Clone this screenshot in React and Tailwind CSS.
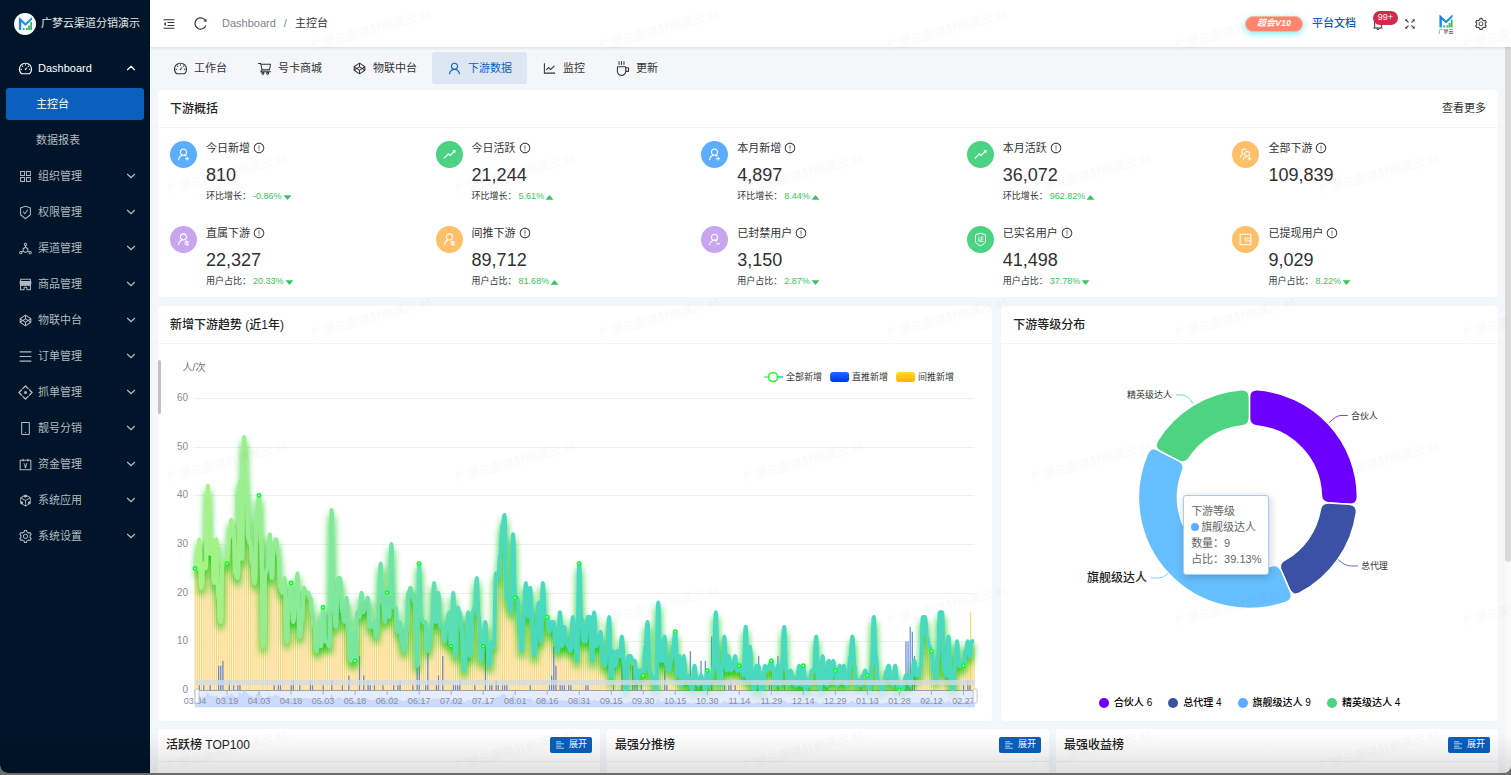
import { useState } from 'react';
import { ChevronDown, ChevronUp } from 'lucide-react';
import {
  AiFillCaretDown,
  AiFillCaretUp,
  AiFillShop,
  AiOutlineAccountBook,
  AiOutlineAlignLeft,
  AiOutlineAppstore,
  AiOutlineBell,
  AiOutlineCodeSandbox,
  AiOutlineCodepen,
  AiOutlineCoffee,
  AiOutlineDashboard,
  AiOutlineDeploymentUnit,
  AiOutlineExclamationCircle,
  AiOutlineFullscreen,
  AiOutlineLineChart,
  AiOutlineMenu,
  AiOutlineMenuFold,
  AiOutlineMobile,
  AiOutlineReload,
  AiOutlineRise,
  AiOutlineSafetyCertificate,
  AiOutlineSetting,
  AiOutlineShoppingCart,
  AiOutlineUser,
  AiOutlineUserAdd,
  AiOutlineUserDelete,
  AiOutlineUserSwitch,
  AiOutlineUsergroupAdd,
  AiOutlineWallet,
} from 'react-icons/ai';

function GrabIcon({ className }) {
  return (
    <svg viewBox="0 0 14 14" className={className} fill="none" stroke="currentColor" strokeWidth="1.2">
      <path d="M4.2 3.6 7 .9l2.8 2.7M10.4 4.2 13.1 7l-2.7 2.8M9.8 10.4 7 13.1l-2.8-2.7M3.6 9.8.9 7l2.7-2.8" />
      <circle cx="7" cy="7" r="1.4" fill="currentColor" stroke="none" />
    </svg>
  );
}

function VerifiedIcon({ className }) {
  return (
    <svg viewBox="0 0 15 15" className={className} fill="none" stroke="currentColor">
      <path d="M7.5 1.3 12.5 2.8v6.300c0 2-2.300 3.500-5 4.700-2.700-1.200-5-2.700-5-4.700V2.800z" />
      <path d="M4.800 5.200h.900v4l.700-.6M6.800 5.100h3.600M8.700 5.100v4.200M8.700 7.100h1.500M7 6.700v2.600M6.400 9.400h4.100" strokeWidth=".7" />
    </svg>
  );
}

function LogoMark({ className }) {
  return (
    <svg viewBox="0 0 16 15" className={className}>
      <defs>
        <linearGradient id="logoBlue" x1="0" y1="0" x2="1" y2="1">
          <stop offset="0" stopColor="#1b6fe0" />
          <stop offset="1" stopColor="#12b8e8" />
        </linearGradient>
      </defs>
      <path d="M1 14.500V.500l7 6.500L15 .500v3l-7 6.700-4.500-4.300v8.600z" fill="url(#logoBlue)" />
      <path d="M5 12.200h2v2.300H5z" fill="#22b0e0" />
      <path d="M8.500 12h1.900v2.500H8.500zM10.800 9.700h1.900v4.800h-1.900zM13.100 6h1.900v8.500h-1.900z" fill="#35b85a" />
    </svg>
  );
}

const menus = [
  { label: '组织管理', Icon: AiOutlineAppstore },
  { label: '权限管理', Icon: AiOutlineSafetyCertificate },
  { label: '渠道管理', Icon: AiOutlineDeploymentUnit },
  { label: '商品管理', Icon: AiFillShop },
  { label: '物联中台', Icon: AiOutlineCodepen },
  { label: '订单管理', Icon: AiOutlineMenu },
  { label: '抓单管理', Icon: GrabIcon },
  { label: '靓号分销', Icon: AiOutlineMobile },
  { label: '资金管理', Icon: AiOutlineAccountBook },
  { label: '系统应用', Icon: AiOutlineCodeSandbox },
  { label: '系统设置', Icon: AiOutlineSetting },
];

const tabs = [
  { label: '工作台', Icon: AiOutlineDashboard },
  { label: '号卡商城', Icon: AiOutlineShoppingCart },
  { label: '物联中台', Icon: AiOutlineCodepen },
  { label: '下游数据', Icon: AiOutlineUser },
  { label: '监控', Icon: AiOutlineLineChart },
  { label: '更新', Icon: AiOutlineCoffee },
];

const stats = [
  { label: '今日新增', value: '810', sub: '环比增长：', rate: '-0.86%', up: false, Icon: AiOutlineUserAdd, color: 'bg-[#5cadff]' },
  { label: '今日活跃', value: '21,244', sub: '环比增长：', rate: '5.61%', up: true, Icon: AiOutlineRise, color: 'bg-[#4cd283]' },
  { label: '本月新增', value: '4,897', sub: '环比增长：', rate: '8.44%', up: true, Icon: AiOutlineUserAdd, color: 'bg-[#5cadff]' },
  { label: '本月活跃', value: '36,072', sub: '环比增长：', rate: '962.82%', up: true, Icon: AiOutlineRise, color: 'bg-[#4cd283]' },
  { label: '全部下游', value: '109,839', Icon: AiOutlineUsergroupAdd, color: 'bg-[#ffc069]' },
  { label: '直属下游', value: '22,327', sub: '用户占比：', rate: '20.33%', up: false, Icon: AiOutlineUserSwitch, color: 'bg-[#c9a5f0]' },
  { label: '间推下游', value: '89,712', sub: '用户占比：', rate: '81.68%', up: true, Icon: AiOutlineUserSwitch, color: 'bg-[#ffc069]' },
  { label: '已封禁用户', value: '3,150', sub: '用户占比：', rate: '2.87%', up: false, Icon: AiOutlineUserDelete, color: 'bg-[#c9a5f0]' },
  { label: '已实名用户', value: '41,498', sub: '用户占比：', rate: '37.78%', up: false, Icon: VerifiedIcon, color: 'bg-[#4cd283]' },
  { label: '已提现用户', value: '9,029', sub: '用户占比：', rate: '8.22%', up: false, Icon: AiOutlineWallet, color: 'bg-[#ffc069]' },
];

// daily totals, 03.04 -> 03.04 next year
const totals = [
  25, 25, 31, 21, 26, 25, 42, 28, 31, 22, 31, 19, 14, 27, 27, 26, 31, 35, 33, 24, 23, 43, 27, 52, 41, 31, 30, 26, 22, 36,
  40, 30, 9, 24, 25, 32, 23, 30, 31, 28, 21, 20, 23, 10, 18, 22, 14, 17, 24, 11, 14, 21, 20, 20, 19, 16, 13, 8, 14, 9,
  17, 10, 10, 9, 37, 17, 13, 23, 23, 16, 14, 19, 12, 6, 12, 6, 16, 15, 20, 16, 18, 19, 13, 13, 14, 11, 18, 26, 18, 14,
  20, 15, 30, 17, 17, 12, 14, 10, 8, 12, 20, 21, 19, 18, 5, 26, 15, 14, 14, 8, 10, 14, 22, 14, 20, 13, 13, 10, 14, 16,
  9, 20, 7, 17, 16, 12, 4, 7, 16, 7, 16, 17, 23, 15, 6, 9, 14, 9, 5, 10, 9, 24, 23, 28, 34, 36, 19, 18, 16, 32,
  19, 19, 13, 8, 15, 22, 15, 21, 13, 7, 12, 18, 10, 22, 15, 15, 12, 14, 14, 10, 8, 16, 9, 13, 10, 9, 8, 15, 10, 6,
  26, 15, 10, 10, 15, 15, 6, 16, 9, 10, 12, 6, 5, 8, 15, 2, 8, 5, 8, 7, 11, 5, 0, 7, 7, 6, 6, 2, 4, 4,
  3, 9, 14, 4, 3, 2, 0, 18, 6, 6, 11, 5, 4, 6, 9, 12, 3, 7, 1, 7, 2, 3, 1, 0, 5, 2, 1, 3, 2, 0,
  4, 1, 3, 5, 16, 4, 1, 5, 11, 4, 7, 4, 5, 7, 4, 5, 4, 3, 13, 2, 9, 2, 0, 5, 5, 0, 0, 5, 4, 5,
  6, 4, 1, 5, 1, 6, 13, 4, 1, 4, 3, 1, 1, 5, 1, 5, 0, 2, 1, 4, 4, 11, 2, 0, 7, 2, 1, 6, 2, 6,
  4, 1, 5, 2, 5, 1, 2, 7, 11, 5, 1, 2, 1, 3, 4, 3, 0, 5, 15, 7, 2, 1, 0, 2, 4, 5, 2, 1, 5, 2,
  0, 0, 1, 3, 3, 1, 3, 6, 3, 3, 5, 15, 15, 11, 9, 8, 4, 2, 7, 16, 16, 4, 3, 11, 2, 0, 5, 10, 5, 5,
  5, 8, 10, 7, 10, 10,
];

// direct referrals: day index -> count
const direct = {
  2: 1, 4: 1, 7: 1, 11: 5, 12: 5, 13: 6, 16: 2, 18: 1, 20: 1, 21: 1, 37: 1, 39: 1, 40: 1, 45: 1, 46: 2, 49: 1, 54: 2, 55: 1,
  60: 1, 64: 2, 69: 1, 72: 3, 77: 7, 79: 3, 81: 2, 82: 1, 84: 1, 88: 1, 93: 1, 95: 1, 96: 2, 102: 1, 104: 5, 105: 5, 108: 1,
  109: 9, 113: 1, 114: 3, 116: 7, 121: 1, 122: 1, 123: 1, 124: 2, 131: 1, 136: 8, 138: 1, 139: 1, 141: 2, 142: 1, 144: 1,
  145: 1, 146: 1, 157: 1, 166: 1, 167: 3, 168: 9, 169: 5, 171: 1, 172: 1, 173: 1, 175: 1, 176: 1, 183: 1, 184: 1, 196: 1,
  200: 9, 205: 5, 206: 6, 207: 2, 209: 2, 220: 4, 221: 1, 232: 8, 237: 6, 239: 6, 242: 11, 248: 1, 250: 1, 251: 2, 253: 1,
  264: 7, 269: 1, 270: 1, 273: 7, 276: 1, 296: 6, 312: 3, 317: 1, 333: 10, 334: 10, 335: 13, 336: 12, 337: 7, 360: 1,
  362: 2, 363: 1,
};

const LEFT = 37;
const BASE = 346;
const STEP = 779 / 365;
const UNIT = 292 / 60;
const px = (i) => LEFT + i * STEP;
const py = (v) => BASE - v * UNIT;

const linePath = totals
  .map((v, i) => {
    if (i === 0) return `M${px(0)} ${py(v)}`;
    const mid = px(i - 0.5).toFixed(2);
    return `C${mid} ${py(totals[i - 1]).toFixed(2)} ${mid} ${py(v).toFixed(2)} ${px(i).toFixed(2)} ${py(v).toFixed(2)}`;
  })
  .join('');

const areaPath = `M${LEFT} ${BASE}${totals.map((v, i) => `L${px(i).toFixed(2)} ${py(v).toFixed(2)}`).join('')}L${px(365)} ${BASE}Z`;
const zoomPath = `M${LEFT} 363${totals.map((v, i) => `L${px(i).toFixed(2)} ${(360 - v * 0.27).toFixed(2)}`).join('')}L${px(365)} 363Z`;

const dates = [
  '03.04', '03.19', '04.03', '04.18', '05.03', '05.18', '06.02', '06.17', '07.02', '07.17', '08.01', '08.16', '08.31',
  '09.15', '09.30', '10.15', '10.30', '11.14', '11.29', '12.14', '12.29', '01.13', '01.28', '02.12', '02.27',
];

function TrendChart() {
  return (
    <svg viewBox="0 0 834 377" className="block w-full" role="img" aria-label="新增下游趋势">
      <defs>
        <linearGradient id="lineColor" gradientUnits="userSpaceOnUse" x1="37" y1="0" x2="816" y2="0">
          <stop offset="0" stopColor="#a9f484" />
          <stop offset="0.41" stopColor="#48d9be" />
          <stop offset="1" stopColor="#48d9be" />
        </linearGradient>
        <linearGradient id="blueBar" x1="0" y1="0" x2="0" y2="1">
          <stop offset="0" stopColor="#1a6dff" />
          <stop offset="1" stopColor="#0030ff" />
        </linearGradient>
        <linearGradient id="yellowBar" x1="0" y1="0" x2="0" y2="1">
          <stop offset="0" stopColor="#ffdc2e" />
          <stop offset="1" stopColor="#ffb000" />
        </linearGradient>
        <filter id="lineShadow" filterUnits="userSpaceOnUse" x="0" y="40" width="834" height="330">
          <feDropShadow dx="0" dy="6" stdDeviation="3.5" floodColor="#10c80c" floodOpacity="0.95" />
        </filter>
      </defs>

      <text x="36" y="27" textAnchor="middle" fontSize="10" fill="#6e7079">人/次</text>
      {[0, 10, 20, 30, 40, 50, 60].map((v) => (
        <g key={v}>
          <path d={`M36 ${Math.round(py(v))}.5H816`} stroke={v === 0 ? '#9aa0b4' : '#efeff2'} />
          <text x="30" y={py(v) + 3} textAnchor="end" fontSize="10" fill="#8a8c93">{v}</text>
        </g>
      ))}

      <path d={areaPath} fill="#ffe9c2" opacity="0.65" />
      {totals.map((v, i) => (
        <rect key={i} x={px(i) - 0.4} y={py(v)} width="1" height={v * UNIT} fill="#ffc53a" opacity="0.65" />
      ))}
      <rect x="812" y={py(16)} width="1" height={16 * UNIT} fill="#ffd83a" />
      {Object.entries(direct).map(([i, v]) => (
        <rect key={i} x={px(Number(i)) - 0.5} y={py(v)} width="1.3" height={v * UNIT} fill="#3f6cd8" opacity="0.75" />
      ))}
      <path
        d={linePath}
        fill="none"
        stroke="url(#lineColor)"
        strokeWidth="4"
        strokeLinejoin="round"
        strokeLinecap="butt"
        filter="url(#lineShadow)"
      />
      {totals.map((v, i) =>
        i % 15 === 0 ? <circle key={i} cx={px(i)} cy={py(v)} r="1.6" fill="#fff" stroke="#00ff1e" strokeWidth="1.5" /> : null
      )}

      {/* range slider */}
      <rect x="38" y="336" width="779" height="5" fill="#d2dbe6" opacity="0.8" />
      <rect x="38" y="347" width="779" height="16" fill="#dfe8fd" opacity="0.8" />
      <path d={zoomPath} fill="#c6d6fb" stroke="#adc3f5" strokeWidth="0.5" opacity="0.8" />
      {dates.map((d, i) => (
        <g key={d}>
          <path d={`M${px(i * 15)} 347v4`} stroke="#aab0c4" />
          <text x={px(i * 15)} y="360" textAnchor="middle" fontSize="9" fill="#858ca3">{d}</text>
        </g>
      ))}
      <rect x="37" y="345" width="4" height="14" rx="1" fill="#fff" stroke="#acb8d1" strokeWidth="0.8" />
      <rect x="815" y="345" width="4" height="14" rx="1" fill="#fff" stroke="#acb8d1" strokeWidth="0.8" />

      <path d="M606 33h6" stroke="#96efa0" strokeWidth="2" />
      <path d="M619 33h6" stroke="#48d9be" strokeWidth="2" />
      <circle cx="615" cy="33" r="4.5" fill="#fff" stroke="#1cff1c" strokeWidth="1.5" />
      <rect x="672" y="28" width="19" height="10" rx="3" fill="url(#blueBar)" />
      <rect x="738" y="28" width="19" height="10" rx="3" fill="url(#yellowBar)" />
      <g fontSize="9" fill="#333">
        <text x="628" y="36">全部新增</text>
        <text x="694" y="36">直推新增</text>
        <text x="760" y="36">间推新增</text>
      </g>
    </svg>
  );
}

const levels = [
  { name: '合伙人', count: 6, color: '#6c00ff', dot: 'bg-[#6c00ff]' },
  { name: '总代理', count: 4, color: '#3b51a3', dot: 'bg-[#3b51a3]' },
  { name: '旗舰级达人', count: 9, color: '#66bfff', dot: 'bg-[#5cadff]' },
  { name: '精英级达人', count: 4, color: '#4ed382', dot: 'bg-[#4ed382]' },
];

const CX = 248.5;
const CY = 153.5;

// ring sector with rounded corners, angles in radians clockwise from 12 o'clock
function sector(a0, a1, inner, outer) {
  const c = 8;
  const pt = (a, r) => `${(CX + r * Math.sin(a)).toFixed(2)} ${(CY - r * Math.cos(a)).toFixed(2)}`;
  const large = a1 - a0 > Math.PI ? 1 : 0;
  return [
    `M${pt(a0 + c / outer, outer)}`,
    `A${outer} ${outer} 0 ${large} 1 ${pt(a1 - c / outer, outer)}`,
    `Q${pt(a1, outer)} ${pt(a1, outer - c)}`,
    `L${pt(a1, inner + c)}`,
    `Q${pt(a1, inner)} ${pt(a1 - c / inner, inner)}`,
    `A${inner} ${inner} 0 ${large} 0 ${pt(a0 + c / inner, inner)}`,
    `Q${pt(a0, inner)} ${pt(a0, inner + c)}`,
    `L${pt(a0, outer - c)}`,
    `Q${pt(a0, outer)} ${pt(a0 + c / outer, outer)}Z`,
  ].join('');
}

function LevelChart() {
  const sum = levels.reduce((s, l) => s + l.count, 0);
  let angle = 0;
  return (
    <svg viewBox="0 0 497 345" className="block w-full" role="img" aria-label="下游等级分布">
      {levels.map((l, i) => {
        const start = angle;
        angle += (l.count / sum) * Math.PI * 2;
        return (
          <path key={l.name} d={sector(start, angle, 72, i === 2 ? 111 : 108)} fill={l.color} stroke="#fff" strokeWidth="1.5" />
        );
      })}
      <g fill="none">
        <path d="M328 79q7-7.5 12-7.5h7" stroke="#6c00ff" strokeWidth="0.8" />
        <path d="M337 215.5q7 6.5 13 6.5h7" stroke="#3b51a3" strokeWidth="0.8" />
        <path d="M150 234h8q5 0 9-4.5" stroke="#66bfff" strokeWidth="0.8" />
        <path d="M175 51h6q6 0 11 8.5" stroke="#4ed382" strokeWidth="0.8" />
      </g>
      <g fontSize="9" fill="#333">
        <text x="350" y="75">合伙人</text>
        <text x="360" y="225">总代理</text>
        <text x="171" y="54" textAnchor="end">精英级达人</text>
      </g>
      <text x="146" y="238" textAnchor="end" fontSize="12" fontWeight="500" fill="#222">旗舰级达人</text>
    </svg>
  );
}

function Card({ title, extra, className, children }) {
  return (
    <section className={`relative rounded-sm bg-white ${className || ''}`}>
      <header className="flex h-[38px] items-center justify-between border-b border-[#f5f5f7] px-3">
        <h2 className="text-xs font-medium text-[#222]">{title}</h2>
        {extra}
      </header>
      {children}
    </section>
  );
}

function Stat({ label, value, sub, rate, up, Icon, color }) {
  return (
    <div className="flex gap-[9px]">
      <span className={`mt-px flex size-[27px] shrink-0 items-center justify-center rounded-full text-white ${color}`}>
        <Icon className="size-[15px]" />
      </span>
      <div>
        <div className="flex h-4 items-center gap-[3px] text-[11px] text-[#333]">
          {label}
          <AiOutlineExclamationCircle className="size-3" />
        </div>
        <div className="mt-[7px] text-lg leading-6 text-[#303133]">{value}</div>
        {sub && (
          <div className="mt-0.5 flex h-4 items-center text-[9px] text-[#333]">
            {sub}
            <span className="ml-0.5 flex items-center text-[#34c759]">
              {rate}
              {up ? <AiFillCaretUp className="size-[11px]" /> : <AiFillCaretDown className="size-[11px]" />}
            </span>
          </div>
        )}
      </div>
    </div>
  );
}

function Sidebar() {
  const [page, setPage] = useState('主控台');

  return (
    <aside className="w-[150px] shrink-0 bg-[#001529] text-[11px] text-[#b3b9bf]">
      <div className="flex h-[47px] items-center gap-[5px] pl-[14px] text-white/90">
        <span className="flex size-[22px] shrink-0 items-center justify-center rounded-full bg-white">
          <LogoMark className="size-[15px]" />
        </span>
        <span className="whitespace-nowrap">广梦云渠道分销演示</span>
      </div>
      <nav className="flex flex-col gap-1 px-1.5 pt-[5px]">
        <button className="flex h-8 items-center gap-[5px] pr-1.5 pl-3 text-white">
          <AiOutlineDashboard className="size-[15px]" />
          <span className="flex-1 text-left">Dashboard</span>
          <ChevronUp className="size-[14px]" />
        </button>
        {['主控台', '数据报表'].map((p) => (
          <button
            key={p}
            onClick={() => setPage(p)}
            className={`h-8 rounded-[3px] pl-[30px] text-left ${page === p ? 'bg-[#0960bd] text-white' : ''}`}
          >
            {p}
          </button>
        ))}
        {menus.map(({ label, Icon }) => (
          <button key={label} className="flex h-8 items-center gap-[5px] pr-1.5 pl-3">
            <Icon className="size-[15px]" />
            <span className="flex-1 text-left">{label}</span>
            <ChevronDown className="size-[14px]" />
          </button>
        ))}
      </nav>
    </aside>
  );
}

function Header() {
  return (
    <header className="z-10 flex h-[47px] shrink-0 items-center bg-white pr-[23px] pl-3 text-[11px] text-[#333] shadow-[0_1px_3px_rgba(0,21,41,0.12)]">
      <button aria-label="收起菜单"><AiOutlineMenuFold className="size-[14px]" /></button>
      <button aria-label="刷新" className="ml-[17px]"><AiOutlineReload className="size-[15px]" /></button>
      <nav className="ml-[14px] flex gap-2">
        <a href="#" className="text-[#7d8288]">Dashboard</a>
        <span className="text-[#7d8288]">/</span>
        <span>主控台</span>
      </nav>
      <div className="ml-auto flex items-center">
        <span className="flex h-4 w-[58px] items-center justify-center rounded-[10px] border border-[#ffb5a3] bg-[#ff866c] text-[9px] font-bold text-white italic shadow-[0_2px_6px_rgba(0,225,235,0.5)]">
          超会V10
        </span>
        <a href="#" className="ml-[9px] font-medium text-[#0960bd]">平台文档</a>
        <button aria-label="通知" className="relative ml-[15px]">
          <AiOutlineBell className="size-[14px]" />
          <span className="absolute bottom-1.5 left-0.5 flex h-[14px] w-[25px] items-center justify-center rounded-full bg-[#d32a4b] text-[9px] text-white">
            99+
          </span>
        </button>
        <button aria-label="全屏" className="ml-[18px]"><AiOutlineFullscreen className="size-[14px]" /></button>
        <a href="#" className="ml-[21px] flex flex-col items-center text-[5px] leading-[6px]">
          <LogoMark className="h-[14px] w-4" />
          广梦云
        </a>
        <button aria-label="设置" className="ml-5"><AiOutlineSetting className="size-[14px]" /></button>
      </div>
    </header>
  );
}

function Watermark() {
  return (
    <svg className="pointer-events-none absolute inset-0 z-20 size-full" aria-hidden="true">
      <defs>
        <pattern id="mark" width="288" height="288" patternUnits="userSpaceOnUse" x="17" y="46">
          <g fontSize="12" fill="#000" fillOpacity="0.028">
            <text transform="translate(2 148) rotate(-15)">广梦云渠道分销演示 #1</text>
            <text transform="translate(146 292) rotate(-15)">广梦云渠道分销演示 #1</text>
            <text transform="translate(146 4) rotate(-15)">广梦云渠道分销演示 #1</text>
          </g>
        </pattern>
      </defs>
      <rect width="100%" height="100%" fill="url(#mark)" />
    </svg>
  );
}

function App() {
  const [tab, setTab] = useState('下游数据');

  return (
    <div className="h-screen bg-[#6b6b6b] pb-0.5 font-['Liberation_Sans','Noto_Sans_CJK_SC',sans-serif]">
      <div className="relative flex h-full overflow-hidden rounded-b-lg bg-[#f5f6f9]">
        <Sidebar />
        <div className="relative flex min-w-0 flex-1 flex-col">
          <Header />
          <div className="flex min-h-0 flex-1">
            <main className="min-w-0 flex-1 overflow-hidden pr-[7px] pl-2">
              <div className="flex pt-[5px] text-[11px] text-[#333]">
                {tabs.map(({ label, Icon }) => (
                  <button
                    key={label}
                    onClick={() => setTab(label)}
                    className={`flex h-8 items-center gap-1.5 rounded-[3px] px-[15px] ${tab === label ? 'bg-[#dde7f4] text-[#0960bd]' : ''}`}
                  >
                    <Icon className="size-[15px]" />
                    {label}
                  </button>
                ))}
              </div>

              <Card title="下游概括" className="mt-1.5" extra={<a href="#" className="text-[11px] text-[#333]">查看更多</a>}>
                <div className="grid grid-cols-5 gap-y-5 pt-3 pb-[7px] pl-3">
                  {stats.map((s) => <Stat key={s.label} {...s} />)}
                </div>
              </Card>

              <div className="mt-[9px] grid grid-cols-24 gap-[9px]">
                <Card title="新增下游趋势 (近1年)" className="col-span-15">
                  <span className="absolute top-[54px] left-0 h-[54px] w-[3px] rounded-full bg-[#c1c1c1]" />
                  <TrendChart />
                </Card>
                <Card title="下游等级分布" className="col-span-9">
                  <div className="relative">
                    <LevelChart />
                    <div className="absolute top-[151px] left-[182px] rounded-[3px] border border-[#9fceff] bg-white px-[7px] py-[7px] text-[11px] leading-4 whitespace-nowrap text-[#666] shadow-[1px_2px_8px_rgba(0,0,0,0.2)]">
                      <p>下游等级</p>
                      <p className="flex items-center gap-0.5"><i className="size-2 rounded-full bg-[#5cadff]" />旗舰级达人</p>
                      <p>数量：9</p>
                      <p>占比：39.13%</p>
                    </div>
                  </div>
                  <ul className="flex h-7 items-center justify-center gap-4 text-[10px] font-medium text-black">
                    {levels.map((l) => (
                      <li key={l.name} className="flex items-center gap-[5px]">
                        <i className={`size-[10px] rounded-full ${l.dot}`} />
                        {l.name} {l.count}
                      </li>
                    ))}
                  </ul>
                </Card>
              </div>

              <div className="mt-2 grid grid-cols-3 gap-[7px]">
                {['活跃榜 TOP100', '最强分推榜', '最强收益榜'].map((title) => (
                  <section key={title} className="rounded-sm bg-white">
                    <header className="flex h-[33px] items-center justify-between border-b border-[#f0f0f2] px-2">
                      <h2 className="text-xs font-medium text-[#222]">{title}</h2>
                      <button className="flex h-4 items-center gap-1 rounded-xs bg-[#0960bd] px-[5px] text-[9px] text-white">
                        <AiOutlineAlignLeft className="size-[10px]" />
                        展开
                      </button>
                    </header>
                    <div className="h-40" />
                  </section>
                ))}
              </div>
            </main>
            <div className="w-1.5 shrink-0 bg-[#fafafa]">
              <div className="h-[71%] rounded-b-full bg-[#dadada]" />
            </div>
          </div>
          <Watermark />
        </div>
        <div className="pointer-events-none absolute inset-x-0 bottom-0 z-30 h-10 bg-linear-to-t from-black/12 to-transparent" />
      </div>
    </div>
  );
}

export default App;
